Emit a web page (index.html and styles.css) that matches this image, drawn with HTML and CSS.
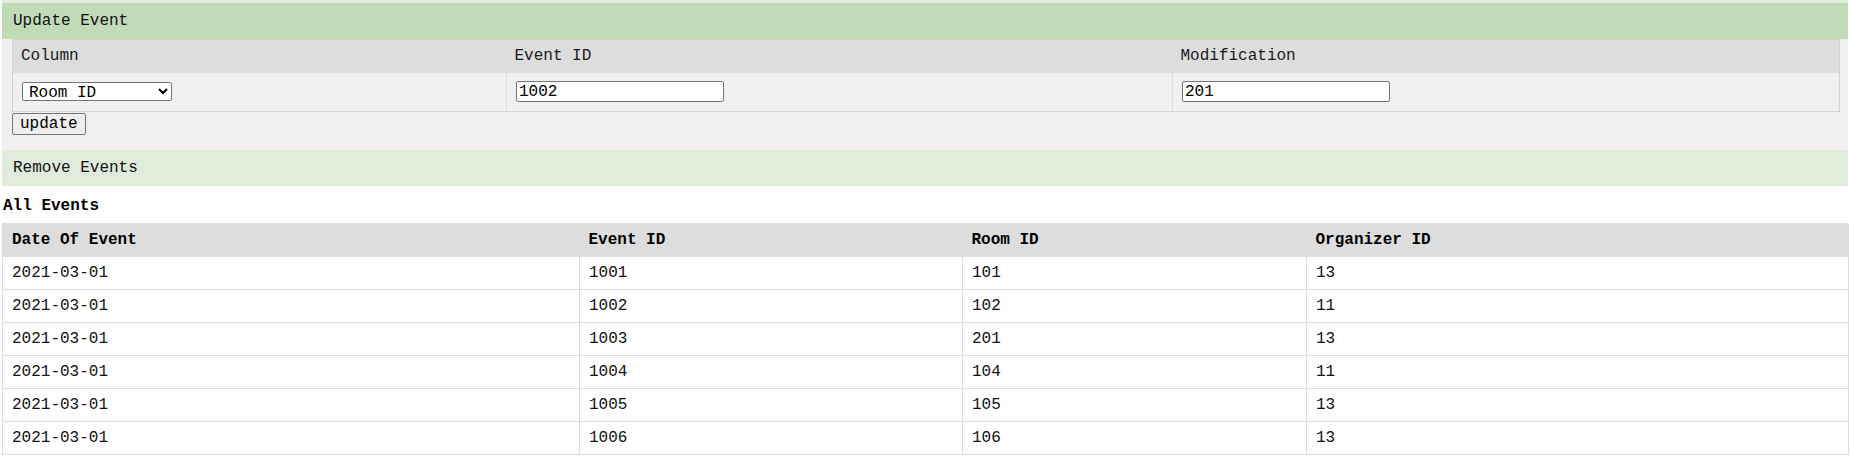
FILE: index.html
```html
<!DOCTYPE html>
<html>
<head>
<meta charset="utf-8">
<title>Events</title>
<link rel="stylesheet" href="styles.css">
</head>
<body>
<div class="strip"></div>
<section class="accordion">
  <div class="band band-dark">Update Event</div>
  <div class="panel">
    <table class="form-table">
      <colgroup><col class="fc1"><col class="fc2"><col class="fc3"></colgroup>
      <thead>
        <tr><th>Column</th><th>Event ID</th><th>Modification</th></tr>
      </thead>
      <tbody>
        <tr>
          <td>
            <select class="sel">
              <option>Room ID</option>
              <option>Date Of Event</option>
              <option>Organizer ID</option>
            </select>
          </td>
          <td><input class="txt" type="text" value="1002"></td>
          <td><input class="txt" type="text" value="201"></td>
        </tr>
      </tbody>
    </table>
    <div class="actions"><button class="btn">update</button></div>
  </div>
  <div class="band band-light">Remove Events</div>
</section>
<div class="title">All Events</div>
<table class="events">
  <colgroup><col class="ec1"><col class="ec2"><col class="ec3"><col class="ec4"></colgroup>
  <thead>
    <tr><th>Date Of Event</th><th>Event ID</th><th>Room ID</th><th>Organizer ID</th></tr>
  </thead>
  <tbody>
    <tr><td>2021-03-01</td><td>1001</td><td>101</td><td>13</td></tr>
    <tr><td>2021-03-01</td><td>1002</td><td>102</td><td>11</td></tr>
    <tr><td>2021-03-01</td><td>1003</td><td>201</td><td>13</td></tr>
    <tr><td>2021-03-01</td><td>1004</td><td>104</td><td>11</td></tr>
    <tr><td>2021-03-01</td><td>1005</td><td>105</td><td>13</td></tr>
    <tr><td>2021-03-01</td><td>1006</td><td>106</td><td>13</td></tr>
  </tbody>
</table>
</body>
</html>
```
FILE: styles.css
```css
html, body {
  margin: 0;
  padding: 0;
  background: #ffffff;
}
body {
  padding: 0 3px 0 2px;
  font-family: "Liberation Mono", "DejaVu Sans Mono", monospace;
  font-size: 16px;
  color: #111;
}
.strip {
  height: 3px;
  background: #e0ecda;
}
.band {
  height: 36px;
  line-height: 36px;
  padding: 0 11px;
  color: #111;
}
.band-dark { background: #c2dbb7; }
.band-light { background: #e0ecda; }
.panel {
  background: #f0f0f0;
  padding: 0 9px 15px 10px;
}
.form-table {
  width: 100%;
  table-layout: fixed;
  border-collapse: collapse;
  border: 1px solid #d3d3d3;
}
.fc1 { width: 494px; }
.fc2 { width: 666px; }
.fc3 { width: 667px; }
.form-table th {
  background: #dddddd;
  font-weight: normal;
  text-align: left;
  padding: 8px 8px;
  line-height: 17px;
  color: #1a1a1a;
}
.form-table td {
  padding: 8px 8px 8px 9px;
  line-height: 21px;
  height: 21px;
  border-left: 1px solid #dddddd;
  vertical-align: middle;
}
.form-table td:first-child { border-left: none; }
.sel {
  width: 150px;
  height: 19px;
  font-family: inherit;
  font-size: 16px;
  color: #000;
  border: 1px solid #767676;
  border-radius: 2px;
  background: #fff;
  padding: 0 0 0 2px;
  vertical-align: middle;
}
.txt {
  box-sizing: border-box;
  width: 208px;
  height: 21px;
  font-family: inherit;
  font-size: 16px;
  color: #000;
  border: 1px solid #767676;
  border-radius: 2px;
  padding: 0 2px;
  background: #fff;
  vertical-align: middle;
}
.actions {
  display: flex;
  padding-top: 1px;
}
.btn {
  box-sizing: border-box;
  height: 22px;
  padding: 0 7px;
  font-family: inherit;
  font-size: 16px;
  line-height: 18px;
  color: #000;
  background: #efefef;
  border: 1px solid #767676;
  border-radius: 2px;
}
.title {
  font-weight: bold;
  line-height: 18px;
  margin: 11px 0 8px 1px;
  color: #000;
}
.events {
  width: 100%;
  table-layout: fixed;
  border-collapse: collapse;
  border: 1px solid #dddddd;
}
.ec1 { width: 577px; }
.ec2 { width: 383px; }
.ec3 { width: 344px; }
.ec4 { width: 542px; }
.events th {
  background: #dddddd;
  text-align: left;
  font-weight: bold;
  padding: 8px 9px 7px;
  line-height: 17px;
  color: #000;
}
.events td {
  padding: 8px 9px 7px;
  line-height: 17px;
  border: 1px solid #dddddd;
  color: #111;
}
```
